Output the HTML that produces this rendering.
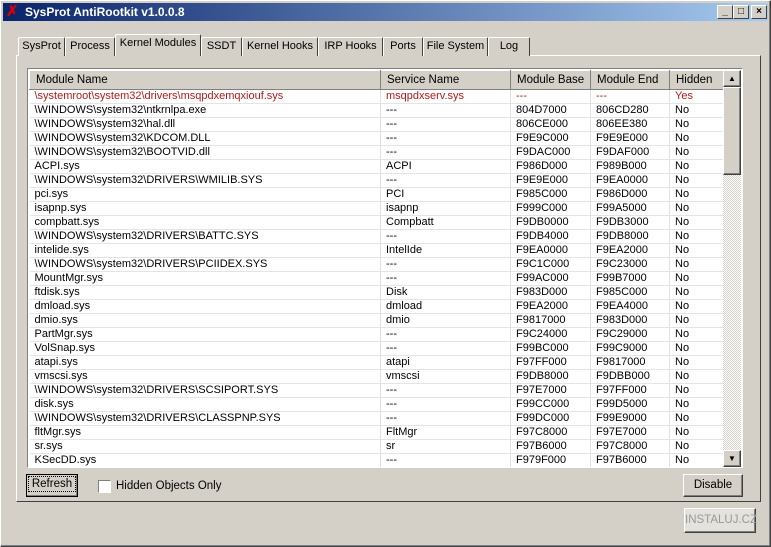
<!DOCTYPE html>
<html><head><meta charset="utf-8"><style>
*{box-sizing:border-box;margin:0;padding:0}
body{width:771px;height:547px;background:#d4d0c8;font-family:"Liberation Sans",sans-serif;font-size:11px;position:relative;overflow:hidden}
.win{position:absolute;left:0;top:0;width:771px;height:547px;border:1px solid #fff;border-right-color:#404040;border-bottom-color:#404040;box-shadow:inset -1px -1px #808080,inset 1px 1px #d4d0c8}
.title{position:absolute;left:3px;top:3px;width:765px;height:18px;background:linear-gradient(90deg,#0a246a,#a6caf0);color:#fff;font-weight:bold;font-size:12px;line-height:18px;padding-left:22px}
.ico{position:absolute;left:3px;top:1px;width:16px;height:16px;color:#d00;font-size:15px;line-height:16px;font-weight:bold}
.tb{position:absolute;top:2px;width:16px;height:14px;background:#d4d0c8;border:1px solid #fff;border-right-color:#404040;border-bottom-color:#404040;color:#000;font-size:10px;line-height:11px;text-align:center}
.r{position:absolute;border:1px solid #fff;border-right-color:#404040;border-bottom-color:#404040}
.tab{position:absolute;top:37px;height:19px;border:1px solid #fff;border-bottom:none;border-right-color:#404040;border-radius:2px 2px 0 0;text-align:center;line-height:17px;font-size:11px;background:#d4d0c8;white-space:nowrap}
.lv{position:absolute;left:27px;top:68px;width:716px;height:400px;border:1px solid #808080;border-right-color:#fff;border-bottom-color:#fff;background:#fff;overflow:hidden}
table{border-collapse:collapse;position:absolute;left:1px;top:1px;table-layout:fixed}
th{background:#d4d0c8;font-weight:normal;text-align:left;height:19px;padding-left:6px;border:1px solid #fff;border-right-color:#808080;border-bottom-color:#808080;font-size:11.5px;white-space:nowrap}
td{height:14px;padding:0 0 0 5px;border-right:1px solid #e0e0e0;border-bottom:1px solid #e4e4e4;white-space:nowrap;overflow:hidden;line-height:13px}
tr.red td{color:#b21a1a}
.sb{position:absolute;left:695px;top:1px;width:18px;height:397px;background:repeating-conic-gradient(#d4d0c8 0 25%,#fff 0 50%) 0 0/2px 2px}
.btn{position:absolute;background:#d4d0c8;border:1px solid #fff;border-right-color:#404040;border-bottom-color:#404040;box-shadow:inset -1px -1px #808080;text-align:center;font-size:11.5px}
</style></head><body>
<div class="win"></div>
<div class="title"><span class="ico">✗</span>SysProt AntiRootkit v1.0.0.8
<div class="tb" style="left:714px">_</div><div class="tb" style="left:730px">□</div><div class="tb" style="left:748px;font-weight:bold">×</div></div>
<div class="r" style="left:16px;top:55px;width:745px;height:447px"></div>
<div class="tab" style="left:18px;width:47px">SysProt</div>
<div class="tab" style="left:65px;width:50px">Process</div>
<div class="tab" style="left:115px;top:34px;height:22px;width:86px;border-bottom:none;z-index:2">Kernel Modules</div>
<div class="tab" style="left:201px;width:41px">SSDT</div>
<div class="tab" style="left:242px;width:76px">Kernel Hooks</div>
<div class="tab" style="left:318px;width:65px">IRP Hooks</div>
<div class="tab" style="left:383px;width:40px">Ports</div>
<div class="tab" style="left:423px;width:65px">File System</div>
<div class="tab" style="left:488px;width:42px">Log</div>
<div class="lv">
<table>
<colgroup><col style="width:351px"><col style="width:130px"><col style="width:80px"><col style="width:79px"><col style="width:55px"></colgroup>
<tr><th>Module Name</th><th>Service Name</th><th>Module Base</th><th>Module End</th><th>Hidden</th></tr>
<tr class="red"><td>\systemroot\system32\drivers\msqpdxemqxiouf.sys</td><td>msqpdxserv.sys</td><td>---</td><td>---</td><td>Yes</td></tr>
<tr><td>\WINDOWS\system32\ntkrnlpa.exe</td><td>---</td><td>804D7000</td><td>806CD280</td><td>No</td></tr>
<tr><td>\WINDOWS\system32\hal.dll</td><td>---</td><td>806CE000</td><td>806EE380</td><td>No</td></tr>
<tr><td>\WINDOWS\system32\KDCOM.DLL</td><td>---</td><td>F9E9C000</td><td>F9E9E000</td><td>No</td></tr>
<tr><td>\WINDOWS\system32\BOOTVID.dll</td><td>---</td><td>F9DAC000</td><td>F9DAF000</td><td>No</td></tr>
<tr><td>ACPI.sys</td><td>ACPI</td><td>F986D000</td><td>F989B000</td><td>No</td></tr>
<tr><td>\WINDOWS\system32\DRIVERS\WMILIB.SYS</td><td>---</td><td>F9E9E000</td><td>F9EA0000</td><td>No</td></tr>
<tr><td>pci.sys</td><td>PCI</td><td>F985C000</td><td>F986D000</td><td>No</td></tr>
<tr><td>isapnp.sys</td><td>isapnp</td><td>F999C000</td><td>F99A5000</td><td>No</td></tr>
<tr><td>compbatt.sys</td><td>Compbatt</td><td>F9DB0000</td><td>F9DB3000</td><td>No</td></tr>
<tr><td>\WINDOWS\system32\DRIVERS\BATTC.SYS</td><td>---</td><td>F9DB4000</td><td>F9DB8000</td><td>No</td></tr>
<tr><td>intelide.sys</td><td>IntelIde</td><td>F9EA0000</td><td>F9EA2000</td><td>No</td></tr>
<tr><td>\WINDOWS\system32\DRIVERS\PCIIDEX.SYS</td><td>---</td><td>F9C1C000</td><td>F9C23000</td><td>No</td></tr>
<tr><td>MountMgr.sys</td><td>---</td><td>F99AC000</td><td>F99B7000</td><td>No</td></tr>
<tr><td>ftdisk.sys</td><td>Disk</td><td>F983D000</td><td>F985C000</td><td>No</td></tr>
<tr><td>dmload.sys</td><td>dmload</td><td>F9EA2000</td><td>F9EA4000</td><td>No</td></tr>
<tr><td>dmio.sys</td><td>dmio</td><td>F9817000</td><td>F983D000</td><td>No</td></tr>
<tr><td>PartMgr.sys</td><td>---</td><td>F9C24000</td><td>F9C29000</td><td>No</td></tr>
<tr><td>VolSnap.sys</td><td>---</td><td>F99BC000</td><td>F99C9000</td><td>No</td></tr>
<tr><td>atapi.sys</td><td>atapi</td><td>F97FF000</td><td>F9817000</td><td>No</td></tr>
<tr><td>vmscsi.sys</td><td>vmscsi</td><td>F9DB8000</td><td>F9DBB000</td><td>No</td></tr>
<tr><td>\WINDOWS\system32\DRIVERS\SCSIPORT.SYS</td><td>---</td><td>F97E7000</td><td>F97FF000</td><td>No</td></tr>
<tr><td>disk.sys</td><td>---</td><td>F99CC000</td><td>F99D5000</td><td>No</td></tr>
<tr><td>\WINDOWS\system32\DRIVERS\CLASSPNP.SYS</td><td>---</td><td>F99DC000</td><td>F99E9000</td><td>No</td></tr>
<tr><td>fltMgr.sys</td><td>FltMgr</td><td>F97C8000</td><td>F97E7000</td><td>No</td></tr>
<tr><td>sr.sys</td><td>sr</td><td>F97B6000</td><td>F97C8000</td><td>No</td></tr>
<tr><td>KSecDD.sys</td><td>---</td><td>F979F000</td><td>F97B6000</td><td>No</td></tr>
</table>
<div class="sb">
<div class="btn" style="left:0;top:0;width:18px;height:17px;font-size:8px;line-height:15px">▲</div>
<div class="btn" style="left:0;top:17px;width:18px;height:88px"></div>
<div class="btn" style="left:0;top:380px;width:18px;height:17px;font-size:8px;line-height:15px">▼</div>
</div>
</div>
<div class="btn" style="left:26px;top:474px;width:52px;height:23px;border:1px solid #000;line-height:19px"><span style="border:1px dotted #000;padding:1px 3px">Refresh</span></div>
<div style="position:absolute;left:98px;top:480px;width:13px;height:13px;background:#fff;border:1px solid #808080;border-right-color:#fff;border-bottom-color:#fff"></div>
<div style="position:absolute;left:116px;top:480px;font-size:11.5px">Hidden Objects Only</div>
<div class="btn" style="left:683px;top:474px;width:60px;height:23px;line-height:20px">Disable</div>
<div class="btn" style="left:684px;top:508px;width:72px;height:25px;line-height:22px;color:#999;background:#e4e2dc">INSTALUJ.CZ</div>
</body></html>
